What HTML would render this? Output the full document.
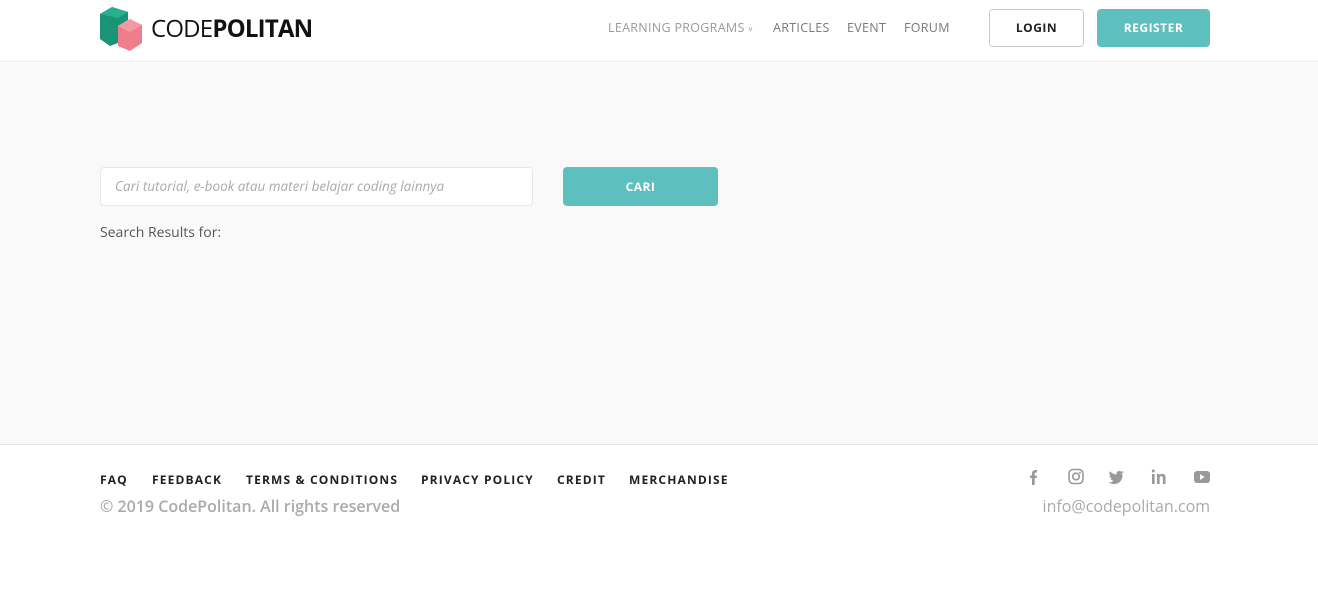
<!DOCTYPE html>
<html><head><meta charset="utf-8"><style>
*{box-sizing:border-box;margin:0;padding:0}
body{width:1318px;height:601px;background:#fff;font-family:"Open Sans","Liberation Sans",sans-serif;position:relative;overflow:hidden}
.hdr{position:absolute;top:0;left:0;width:1318px;height:62px;background:#fff;border-bottom:1px solid #ececec}
.main{position:absolute;top:63px;left:0;width:1318px;height:382px;background:#f9f9f9;border-bottom:1px solid #e5e5e5}
.nav{position:absolute;top:19px;font-size:12.5px;color:#777;letter-spacing:.3px}
.btn{position:absolute;border-radius:4px;font-size:12px;font-weight:bold;text-align:center;letter-spacing:.5px}
.foot a{position:absolute;top:471px;font-size:12px;font-weight:bold;color:#222;letter-spacing:1.15px}
</style></head><body>
<div class="hdr">
<svg style="position:absolute;left:100px;top:6px" width="44" height="45" viewBox="0 0 44 45">
<polygon points="0,8 12,1 28,6 28,14 18,20 18,37 10,40 0,33" fill="#1a9477"/>
<polygon points="12,1 28,6 18,12 0,8" fill="#27b08e"/>
<polygon points="18,20 30,13 42,19 42,37 30,45 18,40" fill="#ef7d8b"/>
<polygon points="30,13 42,19 30,26 18,20" fill="#f49aa5"/>
</svg>
<div style="position:absolute;left:151px;top:14px;font-size:24px;color:#111;letter-spacing:-0.8px;line-height:30px">CODE<b>POLITAN</b></div>
<div class="nav" style="left:608px;color:#999">LEARNING PROGRAMS <span style="font-size:8px">˅</span></div>
<div class="nav" style="left:773px">ARTICLES</div>
<div class="nav" style="left:847px">EVENT</div>
<div class="nav" style="left:904px">FORUM</div>
<div class="btn" style="left:989px;top:9px;width:95px;height:38px;border:1px solid #ccc;line-height:36px;color:#222">LOGIN</div>
<div class="btn" style="left:1097px;top:9px;width:113px;height:38px;background:#5dbfbe;line-height:38px;color:#fff">REGISTER</div>
</div>
<div class="main">
<div style="position:absolute;left:100px;top:104px;width:433px;height:39px;background:#fff;border:1px solid #e8e8e8;border-radius:4px;font-size:13.5px;font-style:italic;color:#aaa;padding-left:14px;line-height:37px">Cari tutorial, e-book atau materi belajar coding lainnya</div>
<div class="btn" style="left:563px;top:104px;width:155px;height:39px;background:#5dbfbe;color:#fff;line-height:39px">CARI</div>
<div style="position:absolute;left:100px;top:160px;font-size:14px;color:#555">Search Results for:</div>
</div>
<div class="foot">
<a style="left:100px">FAQ</a><a style="left:152px">FEEDBACK</a><a style="left:246px">TERMS &amp; CONDITIONS</a><a style="left:421px">PRIVACY POLICY</a><a style="left:557px">CREDIT</a><a style="left:629px">MERCHANDISE</a>
</div>
<div style="position:absolute;left:100px;top:495px;font-size:16px;font-weight:600;color:#aaa">© 2019 CodePolitan. All rights reserved</div>
<div style="position:absolute;right:108px;top:495px;font-size:16px;color:#aaa">info@codepolitan.com</div>
<svg style="position:absolute;left:1025px;top:468px" width="190" height="18" viewBox="0 0 190 18" fill="#999">
<path d="M7 17V10H5V7.5H7V5.5C7 3.5 8 2 10.5 2H12V4.5H10.8C10 4.5 9.7 5 9.7 5.7V7.5H12L11.6 10H9.7V17Z"/>
<rect x="44" y="1.5" width="14" height="14" rx="4" fill="none" stroke="#999" stroke-width="1.6"/><circle cx="51" cy="8.5" r="3.3" fill="none" stroke="#999" stroke-width="1.6"/><circle cx="55" cy="4.6" r="1"/>
<path transform="translate(10,1) scale(1.15)" d="M85 5c1.5.2 2.5-.5 3-1-1 .3-1.5.2-2 .2.7-.4 1.2-1 1.4-1.6-.6.4-1.3.6-2 .8-1.3-1.4-4.6-.6-4 2.4C78.8 5.6 77 4.6 75.6 3c-.8 1.4-.3 3 .8 3.8-.5 0-.9-.2-1.3-.4 0 1.5 1 2.6 2.3 2.9-.4.1-.9.1-1.3 0 .4 1.2 1.5 2 2.8 2.1-1.3 1-3 1.5-4.6 1.3 6 3.6 12.3.3 12.3-6.5z" transform-origin="80 8"/>
<rect x="127" y="6" width="2.6" height="10"/><circle cx="128.3" cy="3" r="1.5"/><path d="M132 6h2.5v1.4c.6-1 1.7-1.6 3-1.6 2.300 0 3 1.5 3 3.8V16h-2.6v-5.8c0-1.2-.4-2-1.5-2s-1.8.8-1.8 2V16H132z"/>
<rect x="169" y="3" width="16" height="12" rx="3"/><path d="M175 6v6l4.5-3z" fill="#fff"/>
</svg>
</body></html>
